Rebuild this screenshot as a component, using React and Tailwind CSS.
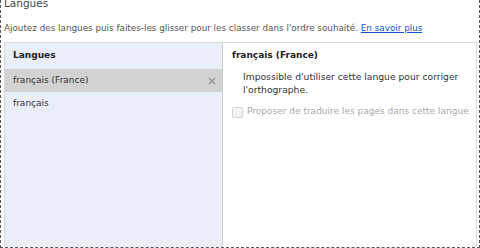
export default function App() {
  return (
    <div className="w-[480px] h-[248px] overflow-hidden bg-white" style={{ fontFamily: '"DejaVu Sans", Verdana, sans-serif' }}>
      <div className="h-[248px] border-x border-b border-dashed border-[#555] flex flex-col">
        <div className="text-[10.5px] leading-[14px] text-[#444] pl-[3px] mt-[-4px]">Langues</div>
        <div className="text-[8.8px] leading-[14px] text-[#555] pl-[3px] mt-[11px] whitespace-nowrap">
          Ajoutez des langues puis faites-les glisser pour les classer dans l'ordre souhaité.{' '}
          <span className="text-[#15c] underline">En savoir plus</span>
        </div>
        <div className="flex flex-1 ml-[3px] mr-[2px] mt-[7px] border border-[#d9d9d9] border-b-0">
          <div className="w-[218px] bg-[#e9eef9] border-r border-[#ccc] flex flex-col">
            <div className="h-[26px] pl-[8px] pt-[5px] text-[9px] leading-[14px] font-bold text-[#222]">Langues</div>
            <div className="h-[23px] bg-[#d2d2d2] flex items-center pl-[8px] pr-[6px] text-[9px] text-[#333]">
              <span className="flex-1">français (France)</span>
              <svg width="8" height="8" viewBox="0 0 8 8"><path d="M1 1L7 7M7 1L1 7" stroke="#999" strokeWidth="1.6" /></svg>
            </div>
            <div className="h-[23px] flex items-center pl-[8px] text-[9px] text-[#333]">français</div>
          </div>
          <div className="flex-1 flex flex-col pl-[9px]">
            <div className="pt-[5px] text-[9px] leading-[14px] font-bold text-[#222]">français (France)</div>
            <div className="pl-[11px] mt-[8px] text-[9.2px] leading-[13px] text-[#333] w-[228px]">Impossible d'utiliser cette langue pour corriger l'orthographe.</div>
            <div className="flex items-center mt-[9px] h-[14px] text-[9px] text-[#aaa] whitespace-nowrap">
              <span className="w-[11px] h-[11px] rounded-[2px] border border-[#d4d4d4] bg-[#f2f2f2] mr-[4px] shrink-0"></span>
              Proposer de traduire les pages dans cette langue
            </div>
          </div>
        </div>
      </div>
    </div>
  );
}
